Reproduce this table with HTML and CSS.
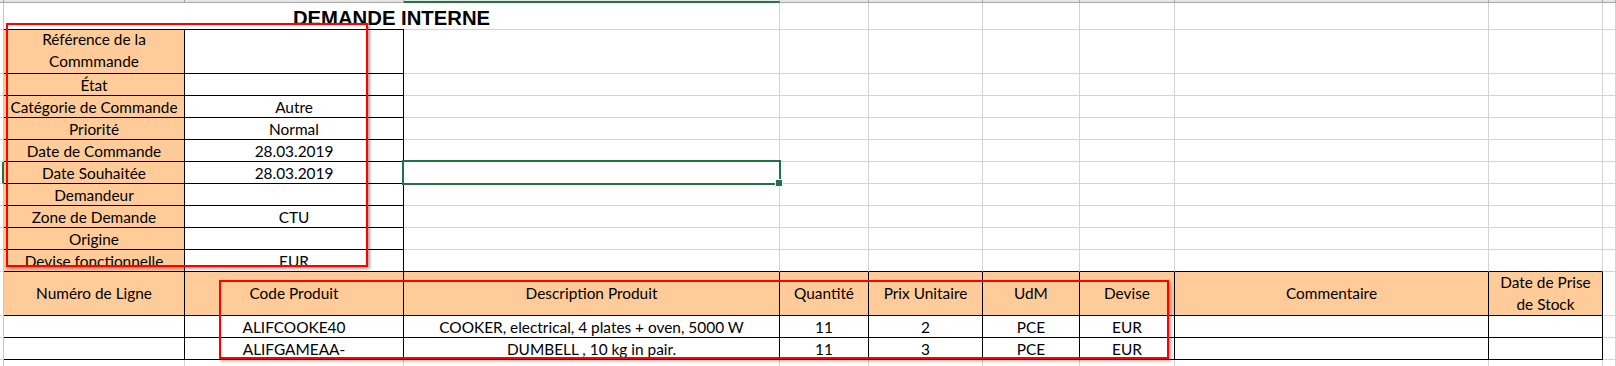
FILE: index.html
```html
<!DOCTYPE html>
<html lang="fr">
<head>
<meta charset="utf-8">
<title>Demande interne</title>
<link rel="stylesheet" href="styles.css">
</head>
<body>
<div class="page">
  <div class="sheet">
    <!-- column header strip -->
    <div class="ch"></div><div class="ch"></div><div class="ch"></div><div class="ch act"></div><div class="ch"></div><div class="ch"></div><div class="ch"></div><div class="ch"></div><div class="ch"></div><div class="ch"></div><div class="ch"></div>

    <!-- row 1 -->
    <div class="rh"></div><div class="g title">DEMANDE INTERNE</div><div class="g"></div><div class="g"></div><div class="g"></div><div class="g"></div><div class="g"></div><div class="g"></div><div class="g"></div>

    <!-- row 2 -->
    <div class="rh"></div><div class="g lbl wrap">Référence de la<br>Commmande</div><div class="g val"></div><div class="g"></div><div class="g"></div><div class="g"></div><div class="g"></div><div class="g"></div><div class="g"></div><div class="g"></div><div class="g"></div>
    <!-- row 3 -->
    <div class="rh"></div><div class="g lbl">État</div><div class="g val"></div><div class="g"></div><div class="g"></div><div class="g"></div><div class="g"></div><div class="g"></div><div class="g"></div><div class="g"></div><div class="g"></div>
    <!-- row 4 -->
    <div class="rh"></div><div class="g lbl">Catégorie de Commande</div><div class="g val">Autre</div><div class="g"></div><div class="g"></div><div class="g"></div><div class="g"></div><div class="g"></div><div class="g"></div><div class="g"></div><div class="g"></div>
    <!-- row 5 -->
    <div class="rh"></div><div class="g lbl">Priorité</div><div class="g val">Normal</div><div class="g"></div><div class="g"></div><div class="g"></div><div class="g"></div><div class="g"></div><div class="g"></div><div class="g"></div><div class="g"></div>
    <!-- row 6 -->
    <div class="rh"></div><div class="g lbl">Date de Commande</div><div class="g val">28.03.2019</div><div class="g"></div><div class="g"></div><div class="g"></div><div class="g"></div><div class="g"></div><div class="g"></div><div class="g"></div><div class="g"></div>
    <!-- row 7 (selected row) -->
    <div class="rh on"></div><div class="g lbl">Date Souhaitée</div><div class="g val">28.03.2019</div><div class="g"></div><div class="g"></div><div class="g"></div><div class="g"></div><div class="g"></div><div class="g"></div><div class="g"></div><div class="g"></div>
    <!-- row 8 -->
    <div class="rh"></div><div class="g lbl">Demandeur</div><div class="g val"></div><div class="g"></div><div class="g"></div><div class="g"></div><div class="g"></div><div class="g"></div><div class="g"></div><div class="g"></div><div class="g"></div>
    <!-- row 9 -->
    <div class="rh"></div><div class="g lbl">Zone de Demande</div><div class="g val">CTU</div><div class="g"></div><div class="g"></div><div class="g"></div><div class="g"></div><div class="g"></div><div class="g"></div><div class="g"></div><div class="g"></div>
    <!-- row 10 -->
    <div class="rh"></div><div class="g lbl">Origine</div><div class="g val"></div><div class="g"></div><div class="g"></div><div class="g"></div><div class="g"></div><div class="g"></div><div class="g"></div><div class="g"></div><div class="g"></div>
    <!-- row 11 -->
    <div class="rh"></div><div class="g lbl">Devise fonctionnelle</div><div class="g val">EUR</div><div class="g bb"></div><div class="g bb"></div><div class="g bb"></div><div class="g bb"></div><div class="g bb"></div><div class="g bb"></div><div class="g bb"></div><div class="g"></div>

    <!-- row 12 : line table header -->
    <div class="rh"></div><div class="g hdr">Numéro de Ligne</div><div class="g hdr">Code Produit</div><div class="g hdr">Description Produit</div><div class="g hdr">Quantité</div><div class="g hdr">Prix Unitaire</div><div class="g hdr">UdM</div><div class="g hdr">Devise</div><div class="g hdr">Commentaire</div><div class="g hdr">Date de Prise<br>de Stock</div><div class="g"></div>
    <!-- row 13 -->
    <div class="rh"></div><div class="g td"></div><div class="g td">ALIFCOOKE40</div><div class="g td">COOKER, electrical, 4 plates + oven, 5000 W</div><div class="g td">11</div><div class="g td">2</div><div class="g td">PCE</div><div class="g td">EUR</div><div class="g td"></div><div class="g td"></div><div class="g"></div>
    <!-- row 14 -->
    <div class="rh"></div><div class="g td"></div><div class="g td">ALIFGAMEAA-</div><div class="g td">DUMBELL , 10 kg in pair.</div><div class="g td">11</div><div class="g td">3</div><div class="g td">PCE</div><div class="g td">EUR</div><div class="g td"></div><div class="g td"></div><div class="g"></div>
    <!-- row 15 -->
    <div class="rh"></div><div class="g"></div><div class="g"></div><div class="g"></div><div class="g"></div><div class="g"></div><div class="g"></div><div class="g"></div><div class="g"></div><div class="g"></div><div class="g"></div>
  </div>

  <div class="selbox"></div>
  <div class="handle"></div>
  <div class="mark mark-head"></div>
  <div class="mark mark-lines"></div>
</div>
</body>
</html>
```

FILE: styles.css
```css
html, body {
  margin: 0;
  padding: 0;
  background: #ffffff;
}

.page {
  position: relative;
  width: 1616px;
  height: 366px;
  overflow: hidden;
}

.sheet {
  display: grid;
  grid-template-columns: 4px 181px 219px 376px 89px 114px 97px 95px 314px 114px 1fr;
  grid-template-rows: 3px 27px 44px repeat(9, 22px) 44px 22px 22px 22px;
  font-family: Lato, "Noto Sans", sans-serif;
  font-size: 15.4px;
  color: #000;
}

/* column header strip */
.ch {
  box-sizing: border-box;
  background: #e6e6e6;
  border-bottom: 1px solid #a6a6a6;
  border-right: 1px solid #a6a6a6;
}
.ch.act {
  border-bottom: 2px solid #217346;
}

/* row header strip */
.rh {
  box-sizing: border-box;
  background: #ffffff;
  border-right: 1px solid #c6c6c6;
  border-bottom: 1px solid #d4d4d4;
}
.rh.on {
  border-right: 2px solid #217346;
}

/* generic cell */
.g {
  box-sizing: border-box;
  border-right: 1px solid #d4d4d4;
  border-bottom: 1px solid #d4d4d4;
  display: flex;
  align-items: flex-end;
  justify-content: center;
  text-align: center;
  white-space: nowrap;
  line-height: 20px;
  overflow: hidden;
}

.title {
  grid-column: span 3;
  border-bottom: none;
  background: linear-gradient(to right, #000 0, #000 400px, #d4d4d4 400px) left bottom / 100% 1px no-repeat;
  font-family: "Liberation Sans", Arial, sans-serif;
  font-weight: bold;
  font-size: 20.3px;
  line-height: 20px;
  padding-bottom: 2px;
}

.lbl {
  background: #ffcc99;
  border-right-color: #000;
  border-bottom-color: #000;
}
.val {
  border-right-color: #000;
  border-bottom-color: #000;
}
.wrap {
  line-height: 21.5px;
  padding-bottom: 1px;
}
.bb {
  border-bottom-color: #000;
}

.hdr {
  background: #ffcc99;
  border-right-color: #000;
  border-bottom-color: #000;
  align-items: center;
  line-height: 21.5px;
}
.td {
  border-right-color: #000;
  border-bottom-color: #000;
}

/* selection */
.selbox {
  position: absolute;
  left: 402px;
  top: 160px;
  width: 379px;
  height: 25px;
  box-sizing: border-box;
  border: 2px solid #217346;
}
.handle {
  position: absolute;
  left: 775px;
  top: 179px;
  width: 8px;
  height: 8px;
  box-sizing: border-box;
  background: #217346;
  border: 1px solid #ffffff;
}

/* red annotation frames */
.mark {
  position: absolute;
  box-sizing: border-box;
  border: 2px solid #ff0000;
  box-shadow: 2px 2px 3px rgba(0, 0, 0, 0.35);
}
.mark-head {
  left: 6px;
  top: 23px;
  width: 362px;
  height: 244px;
}
.mark-lines {
  left: 219px;
  top: 280px;
  width: 950px;
  height: 79px;
}
```
